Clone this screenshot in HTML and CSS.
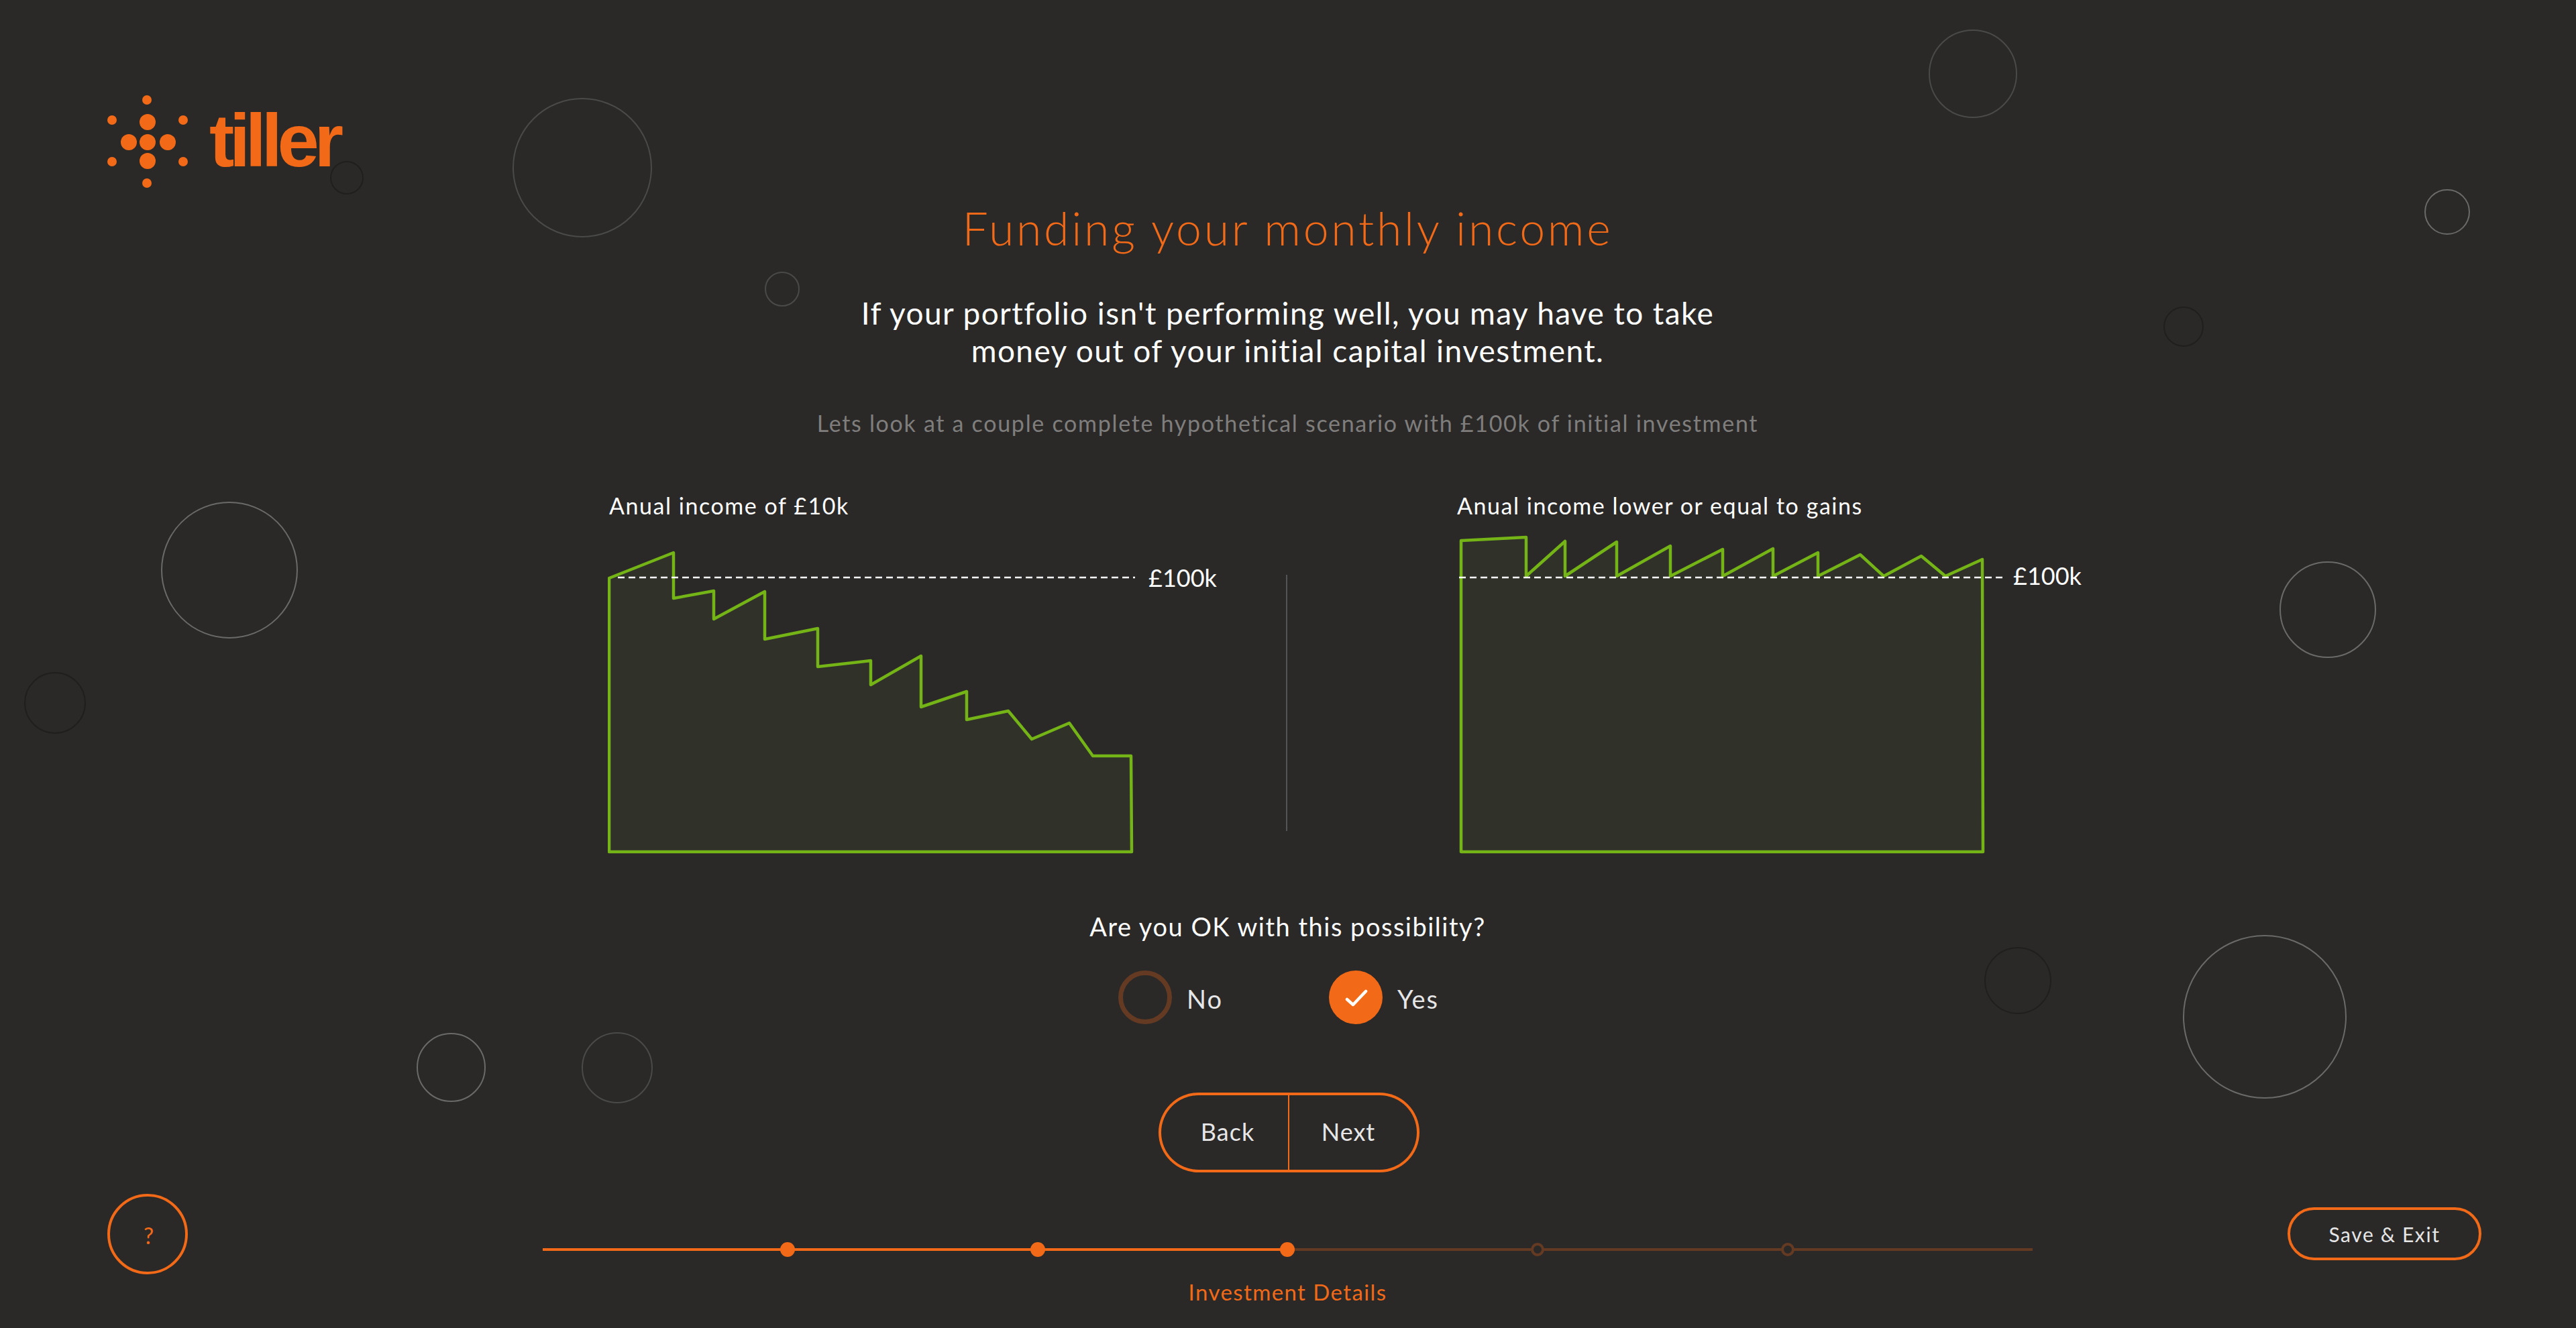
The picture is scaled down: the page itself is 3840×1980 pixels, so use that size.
FILE: index.html
```html
<!DOCTYPE html>
<html lang="en">
<head>
  <meta charset="UTF-8">
  <title>Funding your monthly income</title>
  <link rel="stylesheet" href="styles.css">
</head>
<body>
  <svg class="bubbles" viewBox="0 0 3840 1980">
    <circle class="bubble-mid" cx="868" cy="250" r="103"/>
    <circle class="bubble-mid" cx="1166" cy="431" r="25"/>
    <circle class="bubble-dark" cx="517" cy="265" r="24"/>
    <circle class="bubble-light" cx="342" cy="850" r="101"/>
    <circle class="bubble-dark" cx="82" cy="1048" r="45"/>
    <circle class="bubble-light" cx="672.5" cy="1591.5" r="50.5"/>
    <circle class="bubble-mid" cx="920" cy="1592" r="52"/>
    <circle class="bubble-mid" cx="2941" cy="110" r="65"/>
    <circle class="bubble-light" cx="3648" cy="316" r="33"/>
    <circle class="bubble-dark" cx="3255" cy="487" r="29"/>
    <circle class="bubble-light" cx="3470" cy="909" r="71"/>
    <circle class="bubble-dark" cx="3008" cy="1462" r="49"/>
    <circle class="bubble-light" cx="3376" cy="1516" r="121"/>
  </svg>

  <div class="page">
    <aside class="side side-left">
      <div class="logo">
        <svg class="logo-mark" viewBox="160 140 120 140">
          <circle cx="220" cy="182" r="12"/>
          <circle cx="192" cy="212" r="12"/>
          <circle cx="220" cy="212" r="12"/>
          <circle cx="250" cy="212" r="12"/>
          <circle cx="220" cy="240" r="12"/>
          <circle cx="219" cy="149" r="7"/>
          <circle cx="167" cy="179" r="7"/>
          <circle cx="273" cy="179" r="7"/>
          <circle cx="167" cy="241" r="7"/>
          <circle cx="273" cy="241" r="7"/>
          <circle cx="219" cy="273" r="7"/>
        </svg>
        <span class="logo-text">tiller</span>
      </div>
      <button class="help-btn">?</button>
    </aside>

    <main class="main">
      <h1 class="title">Funding your monthly income</h1>
      <p class="lead">If your portfolio isn't performing well, you may have to take<br>money out of your initial capital investment.</p>
      <p class="note">Lets look at a couple complete hypothetical scenario with £100k of initial investment</p>

      <div class="charts">
        <section class="chart chart-left">
          <h2 class="chart-label">Anual income of £10k</h2>
          <svg class="chart-svg" viewBox="906 795 920 480" width="920" height="480">
            <polygon class="area" points="908,862 1004,824 1004,892 1064,881 1064,923 1140,882 1140,953 1219,937 1219,994 1298,985 1298,1021 1373,978 1373,1054 1441,1031 1441,1073 1503,1060 1538,1102 1594,1078 1629,1127 1686,1127 1687,1270 908,1270"/>
            <line class="dash" x1="921" y1="861" x2="1692" y2="861"/>
            <text class="level" x="1712" y="875">£100k</text>
          </svg>
        </section>
        <div class="divider"></div>
        <section class="chart chart-right">
          <h2 class="chart-label">Anual income lower or equal to gains</h2>
          <svg class="chart-svg" viewBox="2170 795 940 480" width="940" height="480">
            <polygon class="area" points="2178,806 2275,801 2275,859 2333,807 2333,859 2410,808 2410,859 2490,814 2490,859 2568,819 2568,859 2643,818 2643,859 2710,824 2710,859 2773,827 2808,859 2864,829 2900,859 2955,834 2956,1270 2178,1270"/>
            <line class="dash" x1="2175" y1="861" x2="2986" y2="861"/>
            <text class="level" x="3001" y="872">£100k</text>
          </svg>
        </section>
      </div>

      <p class="question">Are you OK with this possibility?</p>
      <div class="options">
        <label class="option">
          <span class="radio"></span>
          <span class="option-text">No</span>
        </label>
        <label class="option">
          <span class="radio radio-on">
            <svg viewBox="0 0 80 80" width="80" height="80"><path d="M27 43 L36 51 L55 31"/></svg>
          </span>
          <span class="option-text">Yes</span>
        </label>
      </div>

      <div class="nav-btns">
        <button class="nav-btn nav-back">Back</button>
        <button class="nav-btn nav-next">Next</button>
      </div>

      <div class="progress">
        <div class="step step-done"><span class="dot"></span></div>
        <div class="step step-done"><span class="dot"></span></div>
        <div class="step step-done"><span class="dot"></span></div>
        <div class="step"><span class="dot"></span></div>
        <div class="step"><span class="dot"></span></div>
        <div class="step step-last"></div>
      </div>
      <p class="step-name">Investment Details</p>
    </main>

    <aside class="side side-right">
      <button class="save-btn">Save &amp; Exit</button>
    </aside>
  </div>
</body>
</html>
```

FILE: styles.css
```css
html, body {
  margin: 0;
  height: 100%;
}

body {
  background-color: #2a2928;
  color: #fff;
  font-family: Lato, "Open Sans", sans-serif;
  overflow: hidden;
  position: relative;
}

button {
  background: none;
  font-family: inherit;
  cursor: pointer;
  padding: 0;
}

.bubbles {
  position: absolute;
  top: 0;
  left: 0;
  width: 3840px;
  height: 1980px;
}

.bubbles circle {
  fill: none;
  stroke-width: 2;
}

.bubble-light { stroke: #6a6a68; }
.bubble-mid { stroke: #4a4a48; }
.bubble-dark { stroke: #201f1e; }

.page {
  position: relative;
  display: grid;
  grid-template-columns: 809px 2221px 810px;
  height: 1980px;
}

/* side columns */
.side {
  display: flex;
  flex-direction: column;
  justify-content: space-between;
}

.side-left {
  padding: 140px 0 80px 160px;
  box-sizing: border-box;
}

.side-right {
  justify-content: flex-end;
  align-items: flex-end;
  padding: 0 141px 101px 0;
}

.logo {
  display: flex;
  align-items: flex-start;
  gap: 32px;
}

.logo-mark {
  width: 120px;
  height: 140px;
  fill: #f26a17;
}

.logo-text {
  color: #f26a17;
  font-family: "Liberation Sans", sans-serif;
  font-weight: 700;
  font-size: 112px;
  letter-spacing: -7.3px;
  line-height: 112px;
  margin-top: 14px;
}

.help-btn {
  width: 120px;
  height: 120px;
  padding: 3px 0 0 3px;
  border: 4px solid #f26a17;
  border-radius: 50%;
  color: #f26a17;
  font-size: 34px;
  font-weight: 400;
}

.save-btn {
  width: 289px;
  height: 79px;
  border: 4px solid #f26a17;
  border-radius: 40px;
  color: #e6e6e6;
  font-size: 30px;
  letter-spacing: 1.6px;
}

/* centre column */
.main {
  text-align: center;
}

.title {
  margin: 0;
  padding-top: 300px;
  color: #f26a17;
  font-size: 68px;
  font-weight: 300;
  line-height: 80px;
  letter-spacing: 3.7px;
}

.lead {
  margin: 59px 0 0;
  font-size: 46px;
  line-height: 56px;
  letter-spacing: 1.4px;
}

.note {
  margin: 60px 0 0;
  color: #7f7e7d;
  font-size: 34px;
  line-height: 40px;
  letter-spacing: 1.7px;
}

.charts {
  display: grid;
  grid-template-columns: 1108px 2px 1fr;
  margin-top: 83px;
  text-align: left;
}

.chart-left { padding-left: 97px; }
.chart-right { padding-left: 251px; }

.chart-label {
  margin: 0 0 0 2px;
  font-size: 34px;
  font-weight: 400;
  line-height: 40px;
  height: 61px;
  letter-spacing: 1.55px;
}

.chart-svg {
  display: block;
}

.area {
  fill: #30322a;
  stroke: #74b416;
  stroke-width: 4.5;
  stroke-linejoin: round;
}

.dash {
  stroke: #fff;
  stroke-width: 2.5;
  stroke-dasharray: 10 6;
}

.level {
  fill: #fff;
  font-size: 36px;
}

.divider {
  width: 2px;
  height: 382px;
  margin-top: 123px;
  background-color: #555;
}

.question {
  margin: 84px 0 0;
  font-size: 38px;
  line-height: 44px;
  letter-spacing: 1.5px;
}

.options {
  display: flex;
  justify-content: center;
  gap: 158px;
  margin-top: 44px;
  padding-right: 27px;
}

.option {
  display: flex;
  align-items: center;
  gap: 22px;
  color: #e6e6e6;
  font-size: 38px;
  letter-spacing: 2px;
}

.option-text {
  margin-top: 3px;
}

.radio {
  display: block;
  width: 80px;
  height: 80px;
  box-sizing: border-box;
  border: 7px solid #653a23;
  border-radius: 50%;
}

.radio-on {
  border: 0;
  background-color: #f26a17;
}

.radio-on svg {
  display: block;
  fill: none;
  stroke: #fff;
  stroke-width: 4.5;
  stroke-linecap: round;
  stroke-linejoin: round;
}

.nav-btns {
  display: flex;
  justify-content: center;
  margin-top: 102px;
  padding-left: 3px;
}

.nav-btn {
  height: 119px;
  padding-bottom: 3px;
  color: #e6e6e6;
  font-size: 36px;
  letter-spacing: 1px;
  border: 4px solid #f26a17;
}

.nav-back {
  width: 195px;
  padding-left: 10px;
  border-right: 2px solid #f26a17;
  border-radius: 60px 0 0 60px;
}

.nav-next {
  width: 194px;
  padding-right: 13px;
  border-left: 0;
  border-radius: 0 60px 60px 0;
}

.progress {
  display: flex;
  margin-top: 113px;
}

.step {
  flex: 373 1 0;
  height: 4px;
  background-color: #653a23;
  display: flex;
  align-items: center;
  justify-content: flex-end;
}

.step:first-child,
.step-last {
  flex-grow: 365;
}

.step-done {
  background-color: #f26a17;
}

.dot {
  width: 20px;
  height: 20px;
  box-sizing: border-box;
  border: 4px solid #653a23;
  border-radius: 50%;
  background-color: #2a2928;
  flex: none;
  margin-right: -10px;
  position: relative;
}

.step-done .dot {
  width: 22px;
  height: 22px;
  border: 0;
  margin-right: -11px;
  background-color: #f26a17;
}

.step-name {
  margin: 41px 0 0;
  color: #f26a17;
  font-size: 33px;
  line-height: 40px;
  letter-spacing: 1.4px;
}
```
